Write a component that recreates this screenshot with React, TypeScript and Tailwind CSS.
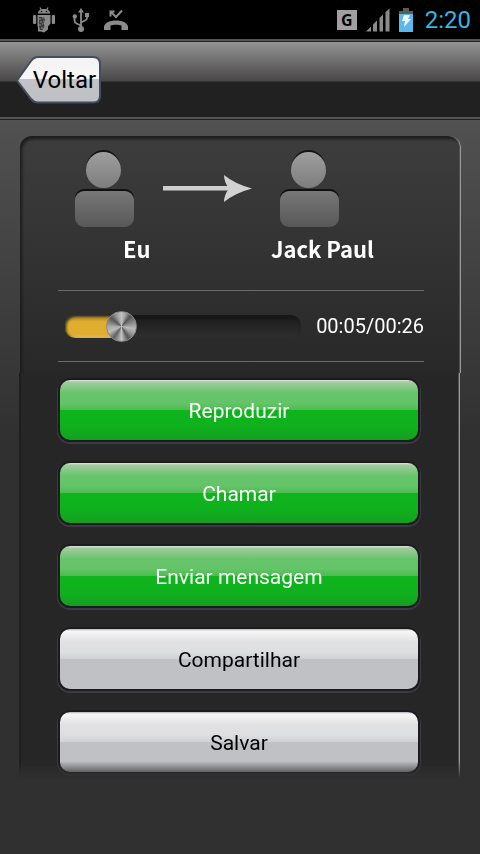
import { useState } from "react";
import type { CSSProperties } from "react";

const TOTAL = 26000;

function StatusBar() {
  return (
    <div className="flex h-[39px] items-center justify-between bg-black pr-[9px] pl-8">
      <div className="flex items-center gap-4 text-[#8b8b8b]">
        <svg className="h-[26px] w-6" viewBox="0 0 24 26" fill="currentColor" aria-label="Android">
          <path d="M6 6.5C6 3.700 8 2 12 2s6 1.700 6 4.500z" />
          <path d="M8 .5l1.600 3M16 .5l-1.600 3" stroke="currentColor" strokeWidth="1.200" />
          <rect x="1" y="8" width="3.200" height="9" rx="1" />
          <rect x="19.800" y="8" width="3.200" height="9" rx="1" />
          <path d="M5.500 8h13v8.500l-2.500 3v3l-4 3-3-1h-3v-4l-.5-2z" />
          <path d="M7 10h5l1 3-1.500 3 1 3-2 4H8l-1-3z" fill="#3a3a3a" />
          <path d="M7 12h2M10 11h2M8 15h2M11 14h1M7 18h2M10 17h1M9 21h2" stroke="#8b8b8b" strokeWidth="1" fill="none" />
          <circle cx="9.500" cy="4.500" r=".8" fill="#000" />
          <circle cx="14.500" cy="4.500" r=".8" fill="#000" />
        </svg>
        <svg className="h-6 w-[18px]" viewBox="0 0 18 24" fill="none" stroke="currentColor" strokeWidth="1.800" aria-label="USB">
          <path d="M9 3v17M9 17.500l-4.500-2Q2.500 14.500 2.500 12V9M9 14.500l4-2Q15 11.500 15 10V6" />
          <path d="M9 0l3 4.500H6z" fill="currentColor" stroke="none" />
          <circle cx="9" cy="21" r="3" fill="currentColor" stroke="none" />
          <circle cx="2.800" cy="8.500" r="2.200" fill="currentColor" stroke="none" />
          <rect x="13" y="5" width="4" height="4" fill="currentColor" stroke="none" />
        </svg>
        <svg className="-ml-0.5 h-[22px] w-[26px]" viewBox="0 0 26 22" fill="currentColor" aria-label="Chamada perdida">
          <path d="M0 21v-3.500C1 13.500 6 11.500 12 11.500s11 2 12 6V21H17.500v-4.500c-3-1-8-1-11 0V21z" />
          <path d="M6.500 2.500V7.500M5.500 2.500h5M7 3l5 5 6-6.500" fill="none" stroke="currentColor" strokeWidth="2" />
        </svg>
      </div>
      <div className="flex items-center">
        <span className="mr-[9px] flex h-5 w-5 items-center justify-center bg-[#a0a0a0] font-['Noto_Sans',sans-serif] text-base leading-5 font-bold text-black">
          G
        </span>
        <svg className="mr-[9px] h-6 w-6" viewBox="0 0 24 24" fill="#8b8b8b" aria-label="Sinal">
          <path d="M0 23.500l5-5v5zM7 16.500l4-4v11H7zM13.500 10L17 6.500v17h-3.500zM19.500 4l4-3.500v23h-4z" />
        </svg>
        <svg className="mr-3 h-6 w-[14px]" viewBox="0 0 14 24" aria-label="Bateria">
          <path d="M0 3h4V0h6v3h4v4H0z" fill="#5b5b5b" />
          <path d="M0 6h14v18H0z" fill="#5cb8e8" />
          <path d="M5 7h6l-2 4h3l-7 8 1-6H3z" fill="#eef8ff" />
        </svg>
        <span className="text-2xl leading-8 text-[#33b5e5]">2:20</span>
      </div>
    </div>
  );
}

function Header() {
  return (
    <header className="flex h-[81px] flex-col border-t-2 border-b border-t-[#555] border-b-[#202020]">
      <div className="flex flex-1 items-center border-t border-b-2 border-t-[#222] border-b-[#555] bg-[linear-gradient(#959595_0,#8c8c8c_4px,#494747_39px,#212121_40px,#212121_100%)] pl-4">
        <button type="button" className="relative h-12 w-[85px] text-2xl leading-8 text-black">
          <svg className="absolute inset-0 h-full w-full" viewBox="0 0 85 48" aria-hidden="true">
            <defs>
              <linearGradient id="back" x2="0" y2="1">
                <stop offset="0" stopColor="#f3f3f3" />
                <stop offset=".48" stopColor="#f7f7f7" />
                <stop offset=".49" stopColor="#c2c3c8" />
                <stop offset="1" stopColor="#bfc0c4" />
              </linearGradient>
            </defs>
            <path
              d="M1 24.500L15 5Q18 1 22 1H77Q84 1 84 8V40Q84 46.500 77 46.500H22Q18 46.500 15 43Z"
              fill="url(#back)"
              stroke="#454c5c"
              strokeWidth="2"
            />
          </svg>
          <span className="relative pl-3">Voltar</span>
        </button>
      </div>
    </header>
  );
}

function Avatar() {
  return (
    <svg className="h-[78px] w-[60px]" viewBox="0 0 60 78" aria-hidden="true">
      <defs>
        <linearGradient id="head" x2="0" y2="1">
          <stop offset="0" stopColor="#9f9f9f" />
          <stop offset="1" stopColor="#7d7d7d" />
        </linearGradient>
        <linearGradient id="body" x2="0" y2="1">
          <stop offset="0" stopColor="#777" />
          <stop offset="1" stopColor="#585858" />
        </linearGradient>
      </defs>
      <ellipse cx="29.500" cy="18" rx="17" ry="18" fill="#141414" />
      <ellipse cx="29.500" cy="20" rx="17.500" ry="18" fill="url(#head)" />
      <rect x="1" y="39" width="59" height="36" rx="9" fill="#101010" />
      <rect x="1" y="41" width="59" height="36" rx="9" fill="url(#body)" />
    </svg>
  );
}

function Action({ label, green = false }: { label: string; green?: boolean }) {
  return (
    <button
      type="button"
      className={
        "h-16 rounded-xl border-2 border-[#1c1c20] bg-origin-border pt-[3px] text-[21px] shadow-[0_1px_0_1px_#3b3b43] " +
        (green
          ? "bg-[linear-gradient(#e0e3df_2px,#a4cca0_4px,#67c46b_15px,#64c468_25px,#4cbd50_32px,#0fb51d_32px,#0fb11d_48px,#159c22_100%)] text-white"
          : "bg-[linear-gradient(#b0b0b4_2px,#f7f7f7_4px,#e1e1e3_15px,#dedfe1_25px,#d0d1d3_32px,#c0c1c5_32px,#c0c1c5_100%)] text-black")
      }
    >
      {label}
    </button>
  );
}

function Player() {
  const [position, setPosition] = useState(5240);
  const share = position / TOTAL;
  const fill: CSSProperties = { backgroundSize: `calc(16px + (100% - 31px) * ${share}) 100%, 100% 100%` };
  const seconds = String(Math.floor(position / 1000)).padStart(2, "0");
  return (
    <div className="flex h-[72px] items-center border-y border-[#6b6b6b] pl-[7px]">
      <input
        type="range"
        aria-label="Posição"
        min={0}
        max={TOTAL}
        step={10}
        value={position}
        onChange={(e) => setPosition(Number(e.target.value))}
        style={fill}
        className="h-[23px] min-w-0 flex-1 appearance-none rounded-[10px] bg-[linear-gradient(#7a6328_0,#b58d2b_3px,#e0ae2f_7px,#e0ae2f_20px,#e6c982_23px),linear-gradient(#121212,#1e1e1e_5px,#303030)] bg-no-repeat shadow-[inset_1px_1px_3px_#1c1c1c] [&::-webkit-slider-thumb]:h-[31px] [&::-webkit-slider-thumb]:w-[31px] [&::-webkit-slider-thumb]:appearance-none [&::-webkit-slider-thumb]:rounded-full [&::-webkit-slider-thumb]:border [&::-webkit-slider-thumb]:border-[#888] [&::-webkit-slider-thumb]:bg-[conic-gradient(#c0c0c0,#aaa_15deg,#555_40deg,#777_60deg,#bbb_100deg,#999_125deg,#555_150deg,#c4c4c4_180deg,#606060_215deg,#bbb_245deg,#aaa_270deg,#555_310deg,#999_335deg,#c0c0c0)]"
      />
      <output className="ml-[15px] text-xl text-white">00:{seconds}/00:26</output>
    </div>
  );
}

export default function App() {
  return (
    <div className="flex min-h-screen flex-col bg-[#303030] font-[Roboto,sans-serif]">
      <StatusBar />
      <Header />
      <main className="flex-1 bg-[linear-gradient(#515151,#303030_320px)] px-[19px] pt-4">
        <div className="[mask-image:linear-gradient(to_bottom,black_calc(100%-17px),transparent)]">
          <section className="ml-px h-[237px] rounded-t-xl border-r border-r-[#999] bg-[linear-gradient(#3d3d3d,#282828)] pt-[14px] pr-9 pl-[38px] shadow-[inset_-1px_0_#505050,inset_2px_3px_3px_#1c1c1c]">
            <div className="flex h-[78px] items-start pl-4">
              <Avatar />
              <svg className="mt-[25px] ml-[29px] h-7 w-[89px]" viewBox="0 0 89 28" aria-hidden="true">
                <path d="M0 11h66v5H0z" fill="#cfcfcf" />
                <path d="M0 15.500h65" stroke="#858585" />
                <path d="M61 0Q72 9 89 13.500Q72 18 61 27Q61 20 66 13.500Q61 7 61 0Z" fill="#d2d2d2" />
              </svg>
              <div className="ml-[27px]">
                <Avatar />
              </div>
            </div>
            <div className="flex h-10 items-center pr-[50px] pl-[65px] font-['Noto_Sans_CJK_SC',sans-serif] text-[22px] leading-8 font-bold text-white">
              <span>Eu</span>
              <span className="ml-auto">Jack Paul</span>
            </div>
            <div className="mt-[22px]">
              <Player />
            </div>
          </section>
          <section className="mr-px flex flex-col gap-[19px] border-r border-l-2 border-l-[#1e1e1e] border-r-[#999] bg-[#262626] pt-[5px] pr-[39px] pb-1 pl-[37px] shadow-[inset_-1px_0_#505050]">
            <Action green label="Reproduzir" />
            <Action green label="Chamar" />
            <Action green label="Enviar mensagem" />
            <Action label="Compartilhar" />
            <Action label="Salvar" />
          </section>
        </div>
      </main>
    </div>
  );
}
